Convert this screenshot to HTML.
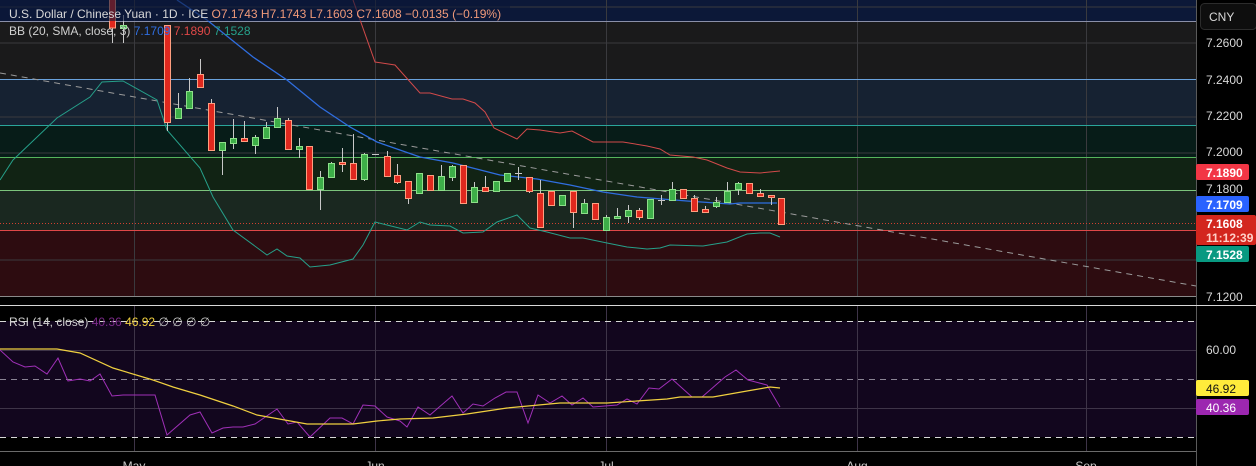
<!DOCTYPE html>
<html><head><meta charset="utf-8"><style>
html,body{margin:0;padding:0;background:#000;width:1256px;height:466px;overflow:hidden}
svg{display:block}
text{font-family:"Liberation Sans",sans-serif}
</style></head><body>
<svg width="1256" height="466" viewBox="0 0 1256 466" xmlns="http://www.w3.org/2000/svg">
<rect x="0" y="0" width="1196" height="21" fill="#0c1838"/>
<rect x="0" y="21" width="1196" height="58" fill="#1a1a1b"/>
<rect x="0" y="79" width="1196" height="46" fill="#162232"/>
<rect x="0" y="125" width="1196" height="32" fill="#071c18"/>
<rect x="0" y="157" width="1196" height="33" fill="#112314"/>
<rect x="0" y="190" width="1196" height="40" fill="#1a2820"/>
<rect x="0" y="230" width="1196" height="66" fill="#2d0c10"/>
<g stroke="#3a3a3e" stroke-width="1">
<line x1="0" y1="7" x2="1196" y2="7"/><line x1="0" y1="43" x2="1196" y2="43"/>
<line x1="0" y1="117" x2="1196" y2="117"/><line x1="0" y1="153" x2="1196" y2="153"/>
<line x1="0" y1="260" x2="1196" y2="260"/>
<line x1="134.5" y1="0" x2="134.5" y2="451"/><line x1="375.5" y1="0" x2="375.5" y2="451"/>
<line x1="606.5" y1="0" x2="606.5" y2="451"/><line x1="857.5" y1="0" x2="857.5" y2="451"/>
<line x1="1086.5" y1="0" x2="1086.5" y2="451"/>
</g>
<line x1="0" y1="21.5" x2="1196" y2="21.5" stroke="#8a8fa8"/>
<line x1="0" y1="79.5" x2="1196" y2="79.5" stroke="#6aa2dc"/>
<line x1="0" y1="125.5" x2="1196" y2="125.5" stroke="#2aa59a"/>
<line x1="0" y1="157.5" x2="1196" y2="157.5" stroke="#56b45c"/>
<line x1="0" y1="190.5" x2="1196" y2="190.5" stroke="#7cc47c"/>
<line x1="0" y1="230.5" x2="1196" y2="230.5" stroke="#e04848"/>
<line x1="0" y1="223.5" x2="1196" y2="223.5" stroke="#d04030" stroke-dasharray="1 2"/>
<line x1="0" y1="73" x2="1196" y2="286" stroke="#9a9a9a" stroke-width="1" stroke-dasharray="6 5"/>
<polyline fill="none" stroke="#d24a4a" stroke-width="1" points="353,0 375,62 395,65 420,93 430,93 452,99 463,99 475,103 485,112 494,128 517,139 527,129 540,130 560,133 572,131 593,142 623,142 647,146 660,149 670,155 693,157 707,160 727,168 740,172 760,173 780,171"/>
<polyline fill="none" stroke="#2f6ee0" stroke-width="1.3" points="177,0 207,20 253,57 287,80 320,107 350,127 377,142 420,157 453,163 500,175 537,179 570,185 603,192 637,197 687,201 730,204 740,203 777,203"/>
<polyline fill="none" stroke="#26a08a" stroke-width="1" points="0,180 13,160 57,118 90,97 102,82 123,81 157,100 167,130 200,168 213,197 233,230 267,255 277,249 287,256 300,258 310,267 330,265 353,259 363,245 375,222 387,225 407,230 420,222 430,225 450,226 463,233 483,232 497,222 517,215 530,228 547,232 570,238 583,238 607,243 627,247 647,249 660,248 670,245 703,246 727,242 747,234 760,233 770,233 780,237"/>
<g stroke="#c8c8c8" stroke-width="1">
<line x1="112.5" y1="0" x2="112.5" y2="43"/><line x1="123.5" y1="15" x2="123.5" y2="43"/>
<line x1="167.5" y1="25" x2="167.5" y2="131"/><line x1="178.5" y1="93" x2="178.5" y2="118"/>
<line x1="189.5" y1="78" x2="189.5" y2="108"/><line x1="200.5" y1="59" x2="200.5" y2="87"/>
<line x1="211.5" y1="99" x2="211.5" y2="151"/><line x1="222.5" y1="142" x2="222.5" y2="175"/>
<line x1="233.5" y1="119" x2="233.5" y2="149"/><line x1="244.5" y1="121" x2="244.5" y2="142"/>
<line x1="255.5" y1="135" x2="255.5" y2="154"/><line x1="266.5" y1="122" x2="266.5" y2="138"/>
<line x1="277.5" y1="107" x2="277.5" y2="127"/><line x1="288.5" y1="118" x2="288.5" y2="149"/>
<line x1="299.5" y1="138" x2="299.5" y2="158"/><line x1="309.5" y1="146" x2="309.5" y2="189"/>
<line x1="320.5" y1="171" x2="320.5" y2="210"/><line x1="331.5" y1="162" x2="331.5" y2="178"/>
<line x1="342.5" y1="148" x2="342.5" y2="172"/><line x1="353.5" y1="134" x2="353.5" y2="179"/>
<line x1="364.5" y1="153" x2="364.5" y2="181"/><line x1="387.5" y1="151" x2="387.5" y2="177"/>
<line x1="397.5" y1="164" x2="397.5" y2="184"/><line x1="408.5" y1="181" x2="408.5" y2="204"/>
<line x1="441.5" y1="165" x2="441.5" y2="190"/><line x1="452.5" y1="165" x2="452.5" y2="181"/>
<line x1="474.5" y1="182" x2="474.5" y2="202"/><line x1="485.5" y1="176" x2="485.5" y2="191"/>
<line x1="518.5" y1="167" x2="518.5" y2="180"/><line x1="529.5" y1="180" x2="529.5" y2="193"/>
<line x1="540.5" y1="180" x2="540.5" y2="227"/><line x1="573.5" y1="191" x2="573.5" y2="228"/>
<line x1="584.5" y1="199" x2="584.5" y2="213"/><line x1="606.5" y1="215" x2="606.5" y2="230"/>
<line x1="617.5" y1="208" x2="617.5" y2="218"/><line x1="628.5" y1="205" x2="628.5" y2="223"/>
<line x1="639.5" y1="208" x2="639.5" y2="220"/><line x1="661.5" y1="195" x2="661.5" y2="205"/>
<line x1="672.5" y1="182" x2="672.5" y2="200"/><line x1="694.5" y1="195" x2="694.5" y2="211"/>
<line x1="705.5" y1="206" x2="705.5" y2="212"/><line x1="716.5" y1="197" x2="716.5" y2="208"/>
<line x1="727.5" y1="182" x2="727.5" y2="202"/><line x1="738.5" y1="182" x2="738.5" y2="195"/>
<line x1="760.5" y1="189" x2="760.5" y2="197"/><line x1="771.5" y1="196" x2="771.5" y2="205"/>
<line x1="372" y1="154.5" x2="379" y2="154.5"/><line x1="658" y1="200.5" x2="665" y2="200.5"/>
<line x1="515" y1="173.5" x2="522" y2="173.5"/>
</g>
<g fill="#e0281e" stroke="#ff9e80" stroke-width="1">
<rect x="109.5" y="-2" width="6" height="30"/><rect x="164.5" y="25.5" width="6" height="97"/>
<rect x="197.5" y="74.5" width="6" height="13"/><rect x="208.5" y="103.5" width="6" height="47"/>
<rect x="241.5" y="138.5" width="6" height="3"/><rect x="285.5" y="120.5" width="6" height="29"/>
<rect x="306.5" y="146.5" width="6" height="43"/><rect x="339.5" y="162.5" width="6" height="2"/>
<rect x="350.5" y="163.5" width="6" height="16"/><rect x="384.5" y="156.5" width="6" height="20"/>
<rect x="394.5" y="175.5" width="6" height="7"/><rect x="405.5" y="181.5" width="6" height="17"/>
<rect x="427.5" y="175.5" width="6" height="15"/><rect x="460.5" y="165.5" width="6" height="38"/>
<rect x="482.5" y="187.5" width="6" height="4"/><rect x="526.5" y="177.5" width="6" height="14"/>
<rect x="537.5" y="193.5" width="6" height="34"/><rect x="548.5" y="191.5" width="6" height="14"/>
<rect x="570.5" y="191.5" width="6" height="21"/><rect x="592.5" y="203.5" width="6" height="16"/>
<rect x="636.5" y="210.5" width="6" height="7"/><rect x="680.5" y="189.5" width="6" height="9"/>
<rect x="691.5" y="198.5" width="6" height="13"/><rect x="702.5" y="209.5" width="6" height="3"/>
<rect x="746.5" y="183.5" width="6" height="10"/><rect x="757.5" y="193.5" width="6" height="3"/>
<rect x="768.5" y="195.5" width="6" height="2"/><rect x="778.5" y="198.5" width="6" height="26"/>
</g>
<g fill="#3dae48" stroke="#8ee08a" stroke-width="1">
<rect x="120.5" y="25.5" width="6" height="3"/><rect x="175.5" y="108.5" width="6" height="10"/>
<rect x="186.5" y="91.5" width="6" height="17"/><rect x="219.5" y="142.5" width="6" height="8"/>
<rect x="230.5" y="138.5" width="6" height="5"/><rect x="252.5" y="137.5" width="6" height="8"/>
<rect x="263.5" y="127.5" width="6" height="11"/><rect x="274.5" y="118.5" width="6" height="9"/>
<rect x="296.5" y="146.5" width="6" height="3"/><rect x="317.5" y="177.5" width="6" height="12"/>
<rect x="328.5" y="163.5" width="6" height="14"/><rect x="361.5" y="154.5" width="6" height="25"/>
<rect x="416.5" y="173.5" width="6" height="20"/><rect x="438.5" y="176.5" width="6" height="14"/>
<rect x="449.5" y="166.5" width="6" height="11"/><rect x="471.5" y="187.5" width="6" height="15"/>
<rect x="493.5" y="181.5" width="6" height="10"/><rect x="504.5" y="173.5" width="6" height="8"/>
<rect x="559.5" y="195.5" width="6" height="10"/><rect x="581.5" y="203.5" width="6" height="10"/>
<rect x="603.5" y="217.5" width="6" height="13"/><rect x="614.5" y="216.5" width="6" height="2"/>
<rect x="625.5" y="210.5" width="6" height="6"/><rect x="647.5" y="199.5" width="6" height="19"/>
<rect x="669.5" y="189.5" width="6" height="11"/><rect x="713.5" y="202.5" width="6" height="4"/>
<rect x="724.5" y="191.5" width="6" height="11"/><rect x="735.5" y="183.5" width="6" height="6"/>
</g>
<rect x="0" y="0" width="510" height="21" fill="#0c1838" opacity="0.6"/>
<text x="9" y="18" font-size="12" fill="#d8d8d8">U.S. Dollar / Chinese Yuan · 1D · ICE <tspan fill="#f09a7a">O7.1743  H7.1743  L7.1603  C7.1608  −0.0135 (−0.19%)</tspan></text>
<text x="9" y="35" font-size="12" fill="#d0d0d0">BB (20, SMA, close, 3) <tspan fill="#2f6ee0">7.1709</tspan> <tspan fill="#e04848">7.1890</tspan> <tspan fill="#26a08a">7.1528</tspan></text>
<rect x="0" y="296" width="1196" height="9" fill="#000"/>
<line x1="0" y1="296.5" x2="1196" y2="296.5" stroke="#8a8a8a"/>
<line x1="0" y1="305.5" x2="1196" y2="305.5" stroke="#d8d8d8"/>
<rect x="0" y="306" width="1196" height="145" fill="#000"/>
<rect x="0" y="321" width="1196" height="116" fill="#12061e"/>
<g stroke="#3e3448"><line x1="0" y1="350.5" x2="1196" y2="350.5"/><line x1="0" y1="408.5" x2="1196" y2="408.5"/>
<line x1="134.5" y1="306" x2="134.5" y2="451"/><line x1="375.5" y1="306" x2="375.5" y2="451"/>
<line x1="606.5" y1="306" x2="606.5" y2="451"/><line x1="857.5" y1="306" x2="857.5" y2="451"/>
<line x1="1086.5" y1="306" x2="1086.5" y2="451"/></g>
<g stroke-dasharray="6 5"><line x1="0" y1="321.5" x2="1196" y2="321.5" stroke="#d8d8d8"/>
<line x1="0" y1="379.5" x2="1196" y2="379.5" stroke="#8a8494"/>
<line x1="0" y1="437.5" x2="1196" y2="437.5" stroke="#d8d8d8"/></g>
<polyline fill="none" stroke="#a030b8" stroke-width="1" points="0,350 13,362 25,367 35,366 47,374 58,358 68,381 80,379 90,381 100,374 112,396 123,395 155,395 167,435 190,415 200,412 212,433 223,428 233,427 243,427 255,424 277,409 288,424 297,422 310,437 330,418 342,418 353,424 363,405 375,406 387,417 400,421 407,427 418,407 430,415 452,396 463,413 473,404 483,406 495,398 506,392 517,392 528,423 538,395 550,403 562,396 572,405 583,398 593,407 617,405 627,399 637,404 649,388 659,389 672,379 692,397 702,397 725,377 736,370 748,380 767,385 780,407"/>
<polyline fill="none" stroke="#f0d040" stroke-width="1.2" points="0,349 57,349 80,353 113,368 153,380 173,387 200,395 233,406 257,415 307,424 353,424 377,421 400,419 433,418 467,414 507,408 560,403 607,403 667,399 680,397 713,397 747,391 770,387 780,388"/>
<text x="9" y="326" font-size="12" fill="#d0d0d0">RSI (14, close) <tspan fill="#7a2a88">40.36</tspan> <tspan fill="#f0d040">46.92</tspan> <tspan fill="#c8c8c8">∅ ∅ ∅ ∅</tspan></text>
<line x1="0" y1="451.5" x2="1256" y2="451.5" stroke="#6a6a6a"/>
<g font-size="12" fill="#c8c8c8" text-anchor="middle">
<text x="134" y="470">May</text><text x="375" y="470">Jun</text><text x="606" y="470">Jul</text>
<text x="857" y="470">Aug</text><text x="1086" y="470">Sep</text></g>
<rect x="1196" y="0" width="60" height="466" fill="#000"/>
<line x1="1196.5" y1="0" x2="1196.5" y2="466" stroke="#5a5a5a"/>
<line x1="1196" y1="305.5" x2="1256" y2="305.5" stroke="#d8d8d8"/>
<rect x="1200.5" y="3.5" width="56" height="26" rx="4" fill="#0e0e0e" stroke="#2c2c2c"/>
<text x="1209" y="21" font-size="12" fill="#d8d8d8">CNY</text>
<g font-size="12" fill="#d8d8d8">
<text x="1206" y="47">7.2600</text><text x="1206" y="84">7.2400</text><text x="1206" y="120">7.2200</text>
<text x="1206" y="156">7.2000</text><text x="1206" y="193">7.1800</text><text x="1206" y="301">7.1200</text>
<text x="1206" y="354">60.00</text></g>
<rect x="1196" y="164" width="53" height="16" rx="2" fill="#f23645"/>
<text x="1206" y="177" font-size="12" font-weight="bold" fill="#fff">7.1890</text>
<rect x="1196" y="196" width="53" height="16" rx="2" fill="#2962ff"/>
<text x="1206" y="209" font-size="12" font-weight="bold" fill="#fff">7.1709</text>
<rect x="1196" y="215" width="60" height="30" rx="2" fill="#d3261e"/>
<text x="1206" y="228" font-size="12" font-weight="bold" fill="#fff">7.1608</text>
<text x="1206" y="242" font-size="12" font-weight="bold" fill="#ffd0c8">11:12:39</text>
<rect x="1196" y="246" width="53" height="16" rx="2" fill="#089981"/>
<text x="1206" y="259" font-size="12" font-weight="bold" fill="#fff">7.1528</text>
<rect x="1196" y="380" width="53" height="16" rx="2" fill="#ffeb3b"/>
<text x="1206" y="393" font-size="12" fill="#111">46.92</text>
<rect x="1196" y="399" width="53" height="16" rx="2" fill="#9c27b0"/>
<text x="1206" y="412" font-size="12" fill="#fff">40.36</text>
</svg>
</body></html>
